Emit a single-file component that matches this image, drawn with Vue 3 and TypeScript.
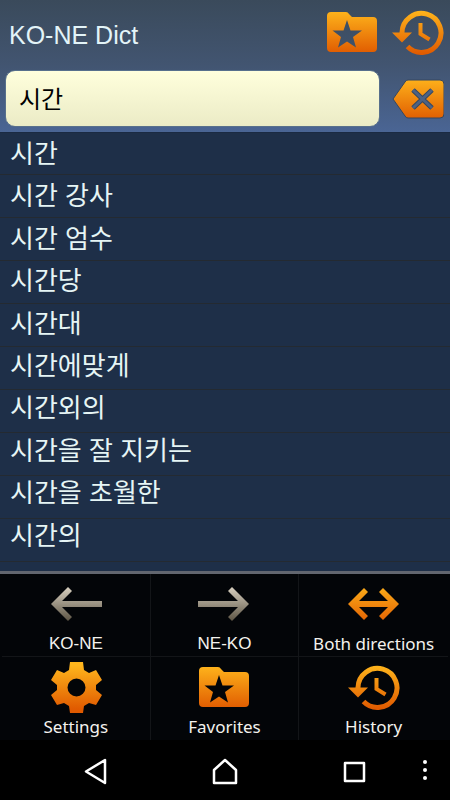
<script setup lang="ts">
import { ref } from 'vue'

type Action = { label: string; icon: 'left' | 'right' | 'both' | 'gear' | 'folder' | 'history'; latin: boolean }

const query = ref<string>('시간')
const words: string[] = [
  '시간', '시간 강사', '시간 엄수', '시간당', '시간대',
  '시간에맞게', '시간외의', '시간을 잘 지키는', '시간을 초월한', '시간의',
]
const actions: Action[] = [
  { label: 'KO-NE', icon: 'left', latin: true },
  { label: 'NE-KO', icon: 'right', latin: true },
  { label: 'Both directions', icon: 'both', latin: false },
  { label: 'Settings', icon: 'gear', latin: false },
  { label: 'Favorites', icon: 'folder', latin: false },
  { label: 'History', icon: 'history', latin: false },
]
</script>

<template>
  <div class="screen">
    <svg class="defs" aria-hidden="true">
      <defs>
        <linearGradient id="amber" gradientUnits="userSpaceOnUse" x1="0" y1="4" x2="0" y2="48">
          <stop offset="0" stop-color="#ffb61c" />
          <stop offset="1" stop-color="#e05a00" />
        </linearGradient>
        <linearGradient id="stone" gradientUnits="userSpaceOnUse" x1="0" y1="9" x2="0" y2="43">
          <stop offset="0" stop-color="#d8d0c0" />
          <stop offset="1" stop-color="#5c5444" />
        </linearGradient>
        <symbol id="i-folder" viewBox="0 0 52 52">
          <path fill="url(#amber)" fill-rule="evenodd" d="M5 6H20Q22 6 23 8L26 11H47Q51 11 51 15V42Q51 46 47 46H5Q1 46 1 42V10Q1 6 5 6ZM21 14L17.500 24.500H6.500L15 31L12 41.500L21 35.500L30 41.500L27 31L36 24.500H24.500Z" />
        </symbol>
        <symbol id="i-history" viewBox="0 0 52 52">
          <path fill="none" stroke="url(#amber)" stroke-width="5" d="M10 27.500V26.500A19.500 19.500 0 1 1 15.500 40.500" />
          <path fill="url(#amber)" d="M0 26.500H20L10 36.500Z" />
          <path fill="none" stroke="url(#amber)" stroke-width="4" d="M28.500 17V28L37.500 33.500" />
        </symbol>
        <symbol id="i-gear" viewBox="0 0 52 52">
          <path fill="url(#amber)" fill-rule="evenodd" d="M20 1H33L34 9L39 12L46 9L52 19L46 24V29L52 34L46 44L39 42L34 45L33 52H20L19 45L14 42L7 44L1 34L7 29V24L1 19L7 9L14 12L19 9ZM26.500 17.500A9 9 0 1 0 26.500 35.500A9 9 0 1 0 26.500 17.500Z" />
        </symbol>
        <symbol id="i-left" viewBox="0 0 52 52">
          <path fill="url(#stone)" d="M1 26L18 9L22 13L12 23H52V29H12L22 39L18 43Z" />
        </symbol>
        <symbol id="i-right" viewBox="0 0 52 52">
          <path fill="url(#stone)" d="M51 26L34 9L30 13L40 23H0V29H40L30 39L34 43Z" />
        </symbol>
        <symbol id="i-both" viewBox="0 0 52 52">
          <path fill="url(#amber)" d="M0 26L16 10L20 14L11 23H40L31 14L35 10L51 26L35 42L31 38L40 29H11L20 38L16 42Z" />
        </symbol>
        <symbol id="i-clear" viewBox="0 0 52 52">
          <path fill="url(#amber)" stroke="#344760" d="M1 26L13 9Q14 7 16 7H48Q52 7 52 11V41Q52 45 48 45H16Q14 45 13 43Z" />
          <path stroke="#344760" stroke-width="5" d="M21 17L40 35M40 17L21 35" />
          <path stroke="#4d6283" stroke-width="3" d="M21 17L40 35M40 17L21 35" />
        </symbol>
      </defs>
    </svg>

    <header class="top">
      <div class="bar">
        <h1>KO-NE Dict</h1>
        <button type="button" aria-label="Favorites"><svg class="icon"><use href="#i-folder" /></svg></button>
        <button type="button" aria-label="History"><svg class="icon"><use href="#i-history" /></svg></button>
      </div>
      <div class="search">
        <input v-model="query" type="text" aria-label="Search word" />
        <button type="button" aria-label="Clear" @click="query = ''"><svg class="icon"><use href="#i-clear" /></svg></button>
      </div>
    </header>

    <ul class="words">
      <li v-for="word in words" :key="word"><a href="#">{{ word }}</a></li>
    </ul>

    <div class="actions">
      <button v-for="action in actions" :key="action.label" type="button" class="action">
        <svg class="icon"><use :href="'#i-' + action.icon" /></svg>
        <span :class="{ latin: action.latin }">{{ action.label }}</span>
      </button>
    </div>

    <nav class="system">
      <button type="button" aria-label="Back">
        <svg class="key" viewBox="0 0 28 28"><path d="M23 3V26L4 14.500Z" /></svg>
      </button>
      <button type="button" aria-label="Home">
        <svg class="key" viewBox="0 0 28 28"><path d="M3 26V13L14 3L25 13V26Z" /></svg>
      </button>
      <button type="button" aria-label="Recent apps">
        <svg class="key" viewBox="0 0 28 28"><path d="M5 6H24V24H5Z" /></svg>
      </button>
      <button type="button" class="more" aria-label="More options">
        <svg class="dots" viewBox="0 0 6 28"><circle cx="3" cy="5" r="2" /><circle cx="3" cy="13" r="2" /><circle cx="3" cy="21" r="2" /></svg>
      </button>
    </nav>
  </div>
</template>

<style>
body {
  background: #000;
}
</style>

<style scoped>
.screen {
  display: flex;
  flex-direction: column;
  min-height: 100vh;
  background: #1e2f48;
  font-family: "Liberation Sans", "Noto Sans CJK KR", sans-serif;
}
.defs {
  position: absolute;
  width: 0;
  height: 0;
}
button {
  padding: 0;
  border: 0;
  background: none;
  color: inherit;
  cursor: pointer;
}
.icon {
  display: block;
  flex-shrink: 0;
  width: 52px;
  height: 52px;
}
.top {
  background: linear-gradient(#3a4a5b, #425571 50%, #4a6594);
  border-bottom: 1px solid #1a2a42;
}
.bar {
  display: flex;
  align-items: flex-start;
  gap: 14px;
  height: 70px;
  padding: 6px 6px 0 9px;
  box-sizing: border-box;
}
h1 {
  flex: 1;
  margin: 0;
  color: #e3f4f8;
  font-size: 25px;
  font-weight: 400;
  line-height: 58px;
}
.search {
  display: flex;
  align-items: center;
  gap: 12px;
  padding: 0 6px 5px 5px;
}
input {
  flex: 1;
  min-width: 0;
  height: 57px;
  padding: 0 13px 3px;
  box-sizing: border-box;
  border: 1px solid #58708c;
  border-radius: 10px;
  background: linear-gradient(#ffffdc, #ebebc6);
  color: #000;
  font: 400 24px "Liberation Sans", "Noto Sans CJK KR", sans-serif;
}
/* Ruled lines run behind the words, down to the foot of the list */
.words {
  flex: 1;
  display: grid;
  grid-auto-rows: 1fr;
  margin: 0;
  padding: 0 0 14px;
  list-style: none;
  background: repeating-linear-gradient(transparent 0 41px, #242a31 41px 42px, transparent 42px 43px);
}
.words a {
  display: block;
  padding: 0 10px;
  color: #e6f5f5;
  font-size: 26px;
  font-weight: 400;
  line-height: 42px;
  text-decoration: none;
}
.actions {
  display: grid;
  grid-template-columns: repeat(3, 1fr);
  padding: 0 2px;
  border-top: 3px solid #62666f;
  background: #030508;
}
.action {
  display: flex;
  flex-direction: column;
  align-items: center;
  gap: 2px;
  height: 83px;
  padding-top: 4px;
  border-right: 1px solid #131518;
  border-bottom: 1px solid #131518;
  color: #f4f2ee;
  font: 17px/24px "Noto Sans", sans-serif;
}
.action:nth-child(3n) {
  border-right: 0;
}
.action:nth-child(n + 4) {
  border-bottom: 0;
}
.latin {
  font-family: "Liberation Sans", sans-serif;
}
.system {
  position: relative;
  display: flex;
  justify-content: center;
  gap: 101px;
  padding: 17px 0 15px;
  background: #000;
}
.key {
  display: block;
  width: 28px;
  height: 28px;
  fill: none;
  stroke: #fff;
  stroke-width: 2.5;
  stroke-linejoin: round;
}
.more {
  position: absolute;
  right: 22px;
  top: 17px;
}
.dots {
  display: block;
  width: 6px;
  height: 28px;
  fill: #fff;
}
</style>
